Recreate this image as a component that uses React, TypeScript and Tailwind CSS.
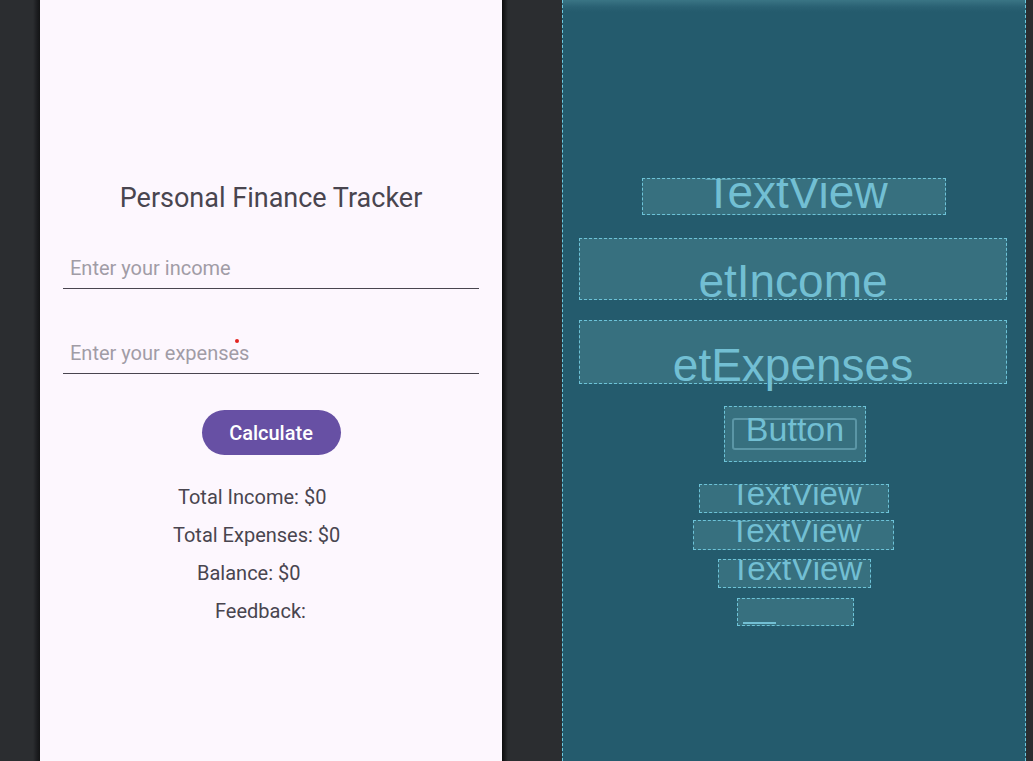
export default function App() {
  return (
    <div className="flex h-[761px] w-[1033px] overflow-hidden bg-[#2b2d30]">
      <div className="w-[40px] shrink-0 bg-[linear-gradient(to_right,#2b2d30_33px,#1c1d20_37px,#131415_40px)]" />
      <Phone />
      <div className="w-[60px] shrink-0 bg-[linear-gradient(to_right,#0c0c0d_0px,#1b1c1e_3px,#2b2d30_6px)]" />
      <Blueprint />
      <div className="flex-1 bg-[#2b2d30]" />
    </div>
  );
}

function Phone() {
  return (
    <div className="relative flex w-[462px] shrink-0 flex-col bg-[#fdf7fe] font-['Roboto',sans-serif]">
      <div className="mt-[182px] text-center text-[27px] leading-[32px] text-[#49454f]">
        Personal Finance Tracker
      </div>
      <div className="mx-[23px] mt-[34px] flex h-[41px] items-end border-b border-[#49454f] pb-[8px] pl-[7px] text-[20px] leading-[24px] text-[#a19ca6]">
        Enter your income
      </div>
      <div className="mx-[23px] mt-[44px] flex h-[41px] items-end border-b border-[#49454f] pb-[8px] pl-[7px] text-[20px] leading-[24px] text-[#a19ca6]">
        Enter your expenses
      </div>
      <div className="mx-auto mt-[36px] flex h-[45px] w-[139px] items-center justify-center rounded-full bg-[#6750a4] text-[20px] font-medium leading-[24px] text-white">
        Calculate
      </div>
      <div className="mt-[30px] flex flex-col gap-[14px] text-[20px] leading-[24px] text-[#49454f]">
        <div className="ml-[138px]">Total Income: $0</div>
        <div className="ml-[133px]">Total Expenses: $0</div>
        <div className="ml-[157px]">Balance: $0</div>
        <div className="ml-[175px]">Feedback:</div>
      </div>
      <div className="absolute left-[195px] top-[339px] h-[4px] w-[4px] rounded-full bg-[#e3231f]" />
    </div>
  );
}

function Blueprint() {
  return (
    <div className="flex w-[464px] shrink-0 flex-col border-x border-dashed border-[#6cc8de] bg-[linear-gradient(to_bottom,#3a7585_0px,#2a6173_7px,#245b6d_12px,#245b6d_100%)] font-['Liberation_Sans',Arial,sans-serif] text-[#72bfd3]">
      <div className="ml-[79px] mt-[178px] flex h-[37px] w-[304px] shrink-0 justify-center overflow-hidden border border-dashed border-[#6dc3d8] bg-[#37707f] pl-[4px]">
        <span className="mt-[-10px] whitespace-nowrap text-[46px] leading-[46px]">TextView</span>
      </div>
      <div className="ml-[16px] mt-[23px] flex h-[62px] w-[428px] shrink-0 justify-center border border-dashed border-[#6dc3d8] bg-[#37707f]">
        <span className="mt-[19px] whitespace-nowrap text-[46px] leading-[46px]">etIncome</span>
      </div>
      <div className="ml-[16px] mt-[20px] flex h-[64px] w-[428px] shrink-0 justify-center border border-dashed border-[#6dc3d8] bg-[#37707f]">
        <span className="mt-[21px] whitespace-nowrap text-[46px] leading-[46px]">etExpenses</span>
      </div>
      <div className="ml-[161px] mt-[22px] grid h-[56px] w-[142px] shrink-0 border border-dashed border-[#6dc3d8] bg-[#37707f]">
        <div className="col-start-1 row-start-1 ml-[7px] mt-[11px] h-[32px] w-[125px] rounded-[3px] border-2 border-[#5b96a6]" />
        <div className="col-start-1 row-start-1 mt-[5px] flex justify-center">
          <span className="whitespace-nowrap text-[34px] leading-[34px]">Button</span>
        </div>
      </div>
      <div className="ml-[136px] mt-[22px] flex h-[29px] w-[190px] shrink-0 justify-center overflow-hidden border border-dashed border-[#6dc3d8] bg-[#37707f] pl-[4px]">
        <span className="mt-[-8px] whitespace-nowrap text-[33px] leading-[33px]">TextView</span>
      </div>
      <div className="ml-[130px] mt-[7px] flex h-[30px] w-[201px] shrink-0 justify-center overflow-hidden border border-dashed border-[#6dc3d8] bg-[#37707f] pl-[4px]">
        <span className="mt-[-7px] whitespace-nowrap text-[33px] leading-[33px]">TextView</span>
      </div>
      <div className="ml-[155px] mt-[9px] flex h-[29px] w-[153px] shrink-0 justify-center overflow-hidden border border-dashed border-[#6dc3d8] bg-[#37707f] pl-[4px]">
        <span className="mt-[-8px] whitespace-nowrap text-[33px] leading-[33px]">TextView</span>
      </div>
      <div className="ml-[174px] mt-[10px] flex h-[28px] w-[117px] shrink-0 items-end border border-dashed border-[#6dc3d8] bg-[#37707f] pb-[1px] pl-[5px]">
        <div className="h-[2px] w-[33px] bg-[#72bfd3]" />
      </div>
    </div>
  );
}
